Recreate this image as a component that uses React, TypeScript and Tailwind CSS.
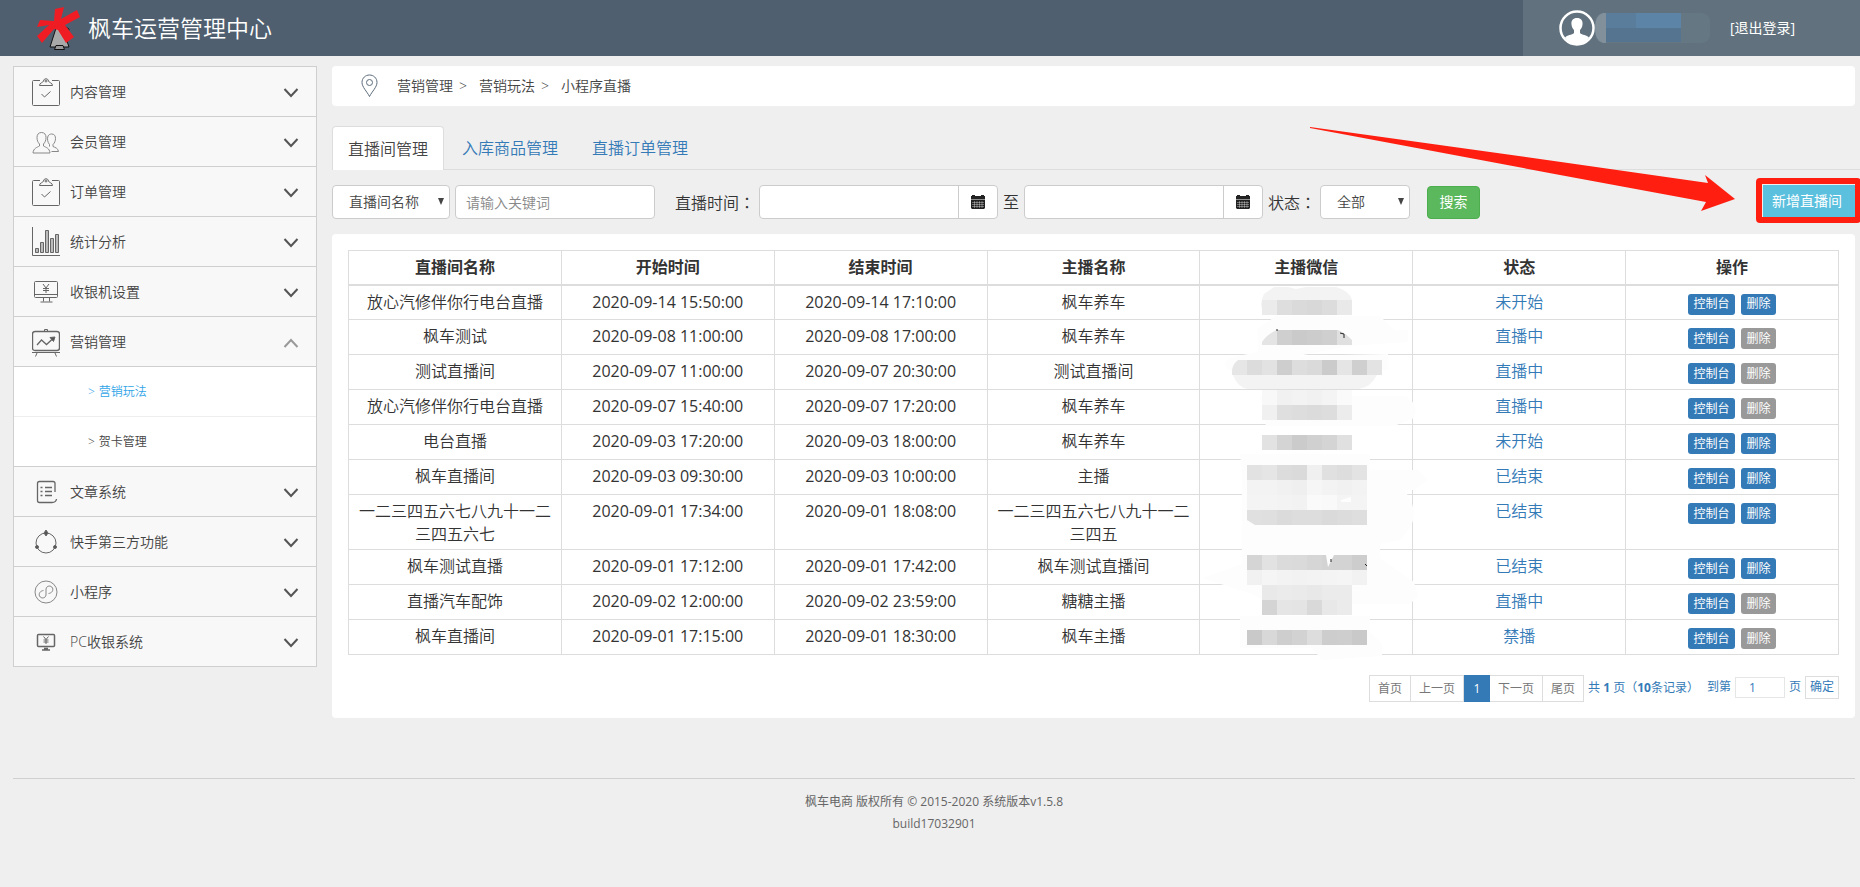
import { useState } from "react";

interface Room {
  name: string;
  start: string;
  end: string;
  anchor: string;
  status: string;
  canDelete: boolean;
}

const rooms: Room[] = [
  { name: "放心汽修伴你行电台直播", start: "2020-09-14 15:50:00", end: "2020-09-14 17:10:00", anchor: "枫车养车", status: "未开始", canDelete: true },
  { name: "枫车测试", start: "2020-09-08 11:00:00", end: "2020-09-08 17:00:00", anchor: "枫车养车", status: "直播中", canDelete: false },
  { name: "测试直播间", start: "2020-09-07 11:00:00", end: "2020-09-07 20:30:00", anchor: "测试直播间", status: "直播中", canDelete: false },
  { name: "放心汽修伴你行电台直播", start: "2020-09-07 15:40:00", end: "2020-09-07 17:20:00", anchor: "枫车养车", status: "直播中", canDelete: false },
  { name: "电台直播", start: "2020-09-03 17:20:00", end: "2020-09-03 18:00:00", anchor: "枫车养车", status: "未开始", canDelete: true },
  { name: "枫车直播间", start: "2020-09-03 09:30:00", end: "2020-09-03 10:00:00", anchor: "主播", status: "已结束", canDelete: true },
  { name: "一二三四五六七八九十一二三四五六七", start: "2020-09-01 17:34:00", end: "2020-09-01 18:08:00", anchor: "一二三四五六七八九十一二三四五", status: "已结束", canDelete: true },
  { name: "枫车测试直播", start: "2020-09-01 17:12:00", end: "2020-09-01 17:42:00", anchor: "枫车测试直播间", status: "已结束", canDelete: true },
  { name: "直播汽车配饰", start: "2020-09-02 12:00:00", end: "2020-09-02 23:59:00", anchor: "糖糖主播", status: "直播中", canDelete: false },
  { name: "枫车直播间", start: "2020-09-01 17:15:00", end: "2020-09-01 18:30:00", anchor: "枫车主播", status: "禁播", canDelete: false },
];

const columns = ["直播间名称", "开始时间", "结束时间", "主播名称", "主播微信", "状态", "操作"];

const menus = [
  { label: "内容管理", icon: "clipboard" },
  { label: "会员管理", icon: "users" },
  { label: "订单管理", icon: "clipboard" },
  { label: "统计分析", icon: "chart" },
  { label: "收银机设置", icon: "cashier" },
  { label: "营销管理", icon: "board", children: ["营销玩法", "贺卡管理"] },
  { label: "文章系统", icon: "article" },
  { label: "快手第三方功能", icon: "ring" },
  { label: "小程序", icon: "mini" },
  { label: "PC收银系统", icon: "pc" },
];

// masked wechat ids: x, y of the first block, then one colour per 15px block
const masks: [number, number, string[]][] = [
  [62, 50, ["#ebebeb", "#dedede", "#dadada", "#d8d8d8", "#dcdcdc", "#e9e9e9"]],
  [62, 80, ["#e4e4e4", "#cfcfcf", "#cacaca", "#cccccc", "#cfcfcf", "#e0e0e0"]],
  [32, 110, ["#e6e6e6", "#dcdcdc", "#e2e2e2", "#cecece", "#dddddd", "#dadada", "#cbcbcb", "#e5e5e5", "#cfcfcf", "#e3e3e3"]],
  [62, 140, ["#f8f8f8", "#f1f1f1", "#f3f3f3", "#f1f1f1", "#f4f4f4", "#fafafa"]],
  [62, 155, ["#f0f0f0", "#dfdfdf", "#dddddd", "#dbdbdb", "#dddddd", "#ececec"]],
  [62, 185, ["#e2e2e2", "#d4d4d4", "#cbcbcb", "#d0d0d0", "#d4d4d4", "#e0e0e0"]],
  [47, 215, ["#e2e2e2", "#e5e5e5", "#dcdcdc", "#dadada", "#f0f0f0", "#e0e0e0", "#dddddd", "#e3e3e3"]],
  [47, 230, ["#f3f3f3", "#f3f3f3", "#f1f1f1", "#efefef", "#f6f6f6", "#f3f3f3", "#f1f1f1", "#f3f3f3"]],
  [47, 245, ["#f4f4f4", "#f4f4f4", "#f3f3f3", "#f2f2f2", "#fafafa", "#f9f9f9", "#f4f4f4", "#f4f4f4"]],
  [47, 260, ["#e0e0e0", "#dfdfdf", "#dbdbdb", "#dddddd", "#dddddd", "#dadada", "#dcdcdc", "#dedede"]],
  [47, 305, ["#d5d5d5", "#e2e2e2", "#dbdbdb", "#dadada", "#d6d6d6", "#d3d3d3", "#d3d3d3", "#cdcdcd"]],
  [47, 320, ["#f1f1f1", "#f5f5f5", "#f3f3f3", "#f2f2f2", "#f3f3f3", "#f4f4f4", "#f5f5f5", "#f2f2f2"]],
  [62, 335, ["#e9e9e9", "#ebebeb", "#eaeaea", "#e8e8e8", "#ebebeb", "#ebebeb"]],
  [62, 350, ["#d4d4d4", "#e5e5e5", "#e4e4e4", "#d9d9d9", "#e8e8e8", "#ebebeb"]],
  [47, 380, ["#c9c9c9", "#d8d8d8", "#cecece", "#d2d2d2", "#dddddd", "#cdcdcd", "#cecece", "#c9c9c9"]],
];

const link = "text-[#337ab7] hover:underline";

// full-width punctuation centred in its box
function Punct({ children }: { children: string }) {
  return <span className="font-['Noto_Sans_CJK_TC',sans-serif]">{children}</span>;
}

function MenuIcon({ name }: { name: string }) {
  return (
    <svg width="28" height="30" viewBox="0 0 28 30" fill="none" stroke="#666" strokeWidth="1" className="shrink-0">
      {name === "clipboard" && (
        <>
          <path d="M8 3.500H1.500q-1 0-1 1v23q0 1 1 1h25q1 0 1-1v-23q0-1-1-1H20" />
          <path d="M7.500 8.500c0-3 3.500-2.500 4-4.500C11.800 1 16.200 1 16.500 4c.5 2 4 1.500 4 4.500z" />
          <circle cx="14" cy="4" r="1" />
          <path d="M9.500 17l3 3 6-5.500" />
        </>
      )}
      {name === "users" && (
        <g stroke="#888">
          <path d="M9.500 5.500c-3 0-4.500 2-4.500 5 0 3 1 5 2.500 6.500v2C5 20.500 1.500 21 1 26h17c-.5-5-4-5.500-6.500-7v-2C13 15.500 14 13.500 14 10.500c0-3-1.500-5-4.500-5z" />
          <path d="M16 9c.8-1.200 2-2 3.500-2 3 0 4 2 4 4.500S22.500 16 21 17.500v2c2 1 5 1.500 5.500 5h-7M16 9c-1 3-.5 6 1.500 8.500v2" />
        </g>
      )}
      {name === "chart" && (
        <>
          <path d="M.5 0v28.500H28" />
          <path d="M3.500 21.500h3v4h-3zM8.500 15.500h3v10h-3zM13.500 3.500h3v22h-3zM18.500 11.500h3v14h-3zM23.500 7.500h3v18h-3z" fill="#bbb" />
        </>
      )}
      {name === "cashier" && (
        <>
          <path d="M3.500 4.500h21q1 0 1 1v14q0 1-1 1h-21q-1 0-1-1v-14q0-1 1-1zM2.500 17.500h23M11.500 20.500v4M17.500 20.500v4M8.500 25h12" />
          <path d="M11 7l3 4 3-4M14 11v5M11 11.500h6M11 13.500h6" />
        </>
      )}
      {name === "board" && (
        <>
          <path d="M3 4.500h22q2.500 0 2.500 2.500v14q0 2.500-2.500 2.500H3Q.5 23.500.5 21V7q0-2.500 2.500-2.500z" strokeWidth="1.400" />
          <path d="M12.500 4V2.500h3V4M0 25.500h28M5 26l-1.500 3.500M23 26l1.500 3.500" />
          <path d="M5 18l4.500-5 5 4.500 6-5.500" strokeWidth="1.300" />
          <path d="M18 10.500l5-.5-1.500 4.500z" fill="#555" />
        </>
      )}
      {name === "article" && (
        <>
          <path d="M23 15V6.500Q23 4.500 21 4.500H7.500Q5.500 4.500 5.500 6.500v17q0 2 2 2H20q4 0 4.500-3.500" strokeWidth="1.300" />
          <path d="M8.500 10.500h2M8.500 14.500h2M8.500 18.500h2M13 10.500h7M13 14.500h7M13 18.500h7" strokeWidth="1.500" />
        </>
      )}
      {name === "ring" && (
        <>
          <circle cx="14" cy="16" r="10" />
          <path d="M14 3l2 3-2 3-2-3z" fill="#555" />
          <circle cx="5" cy="20" r="1.500" fill="#555" />
          <circle cx="23" cy="20" r="1.500" fill="#555" />
        </>
      )}
      {name === "mini" && (
        <g stroke="#888">
          <circle cx="14" cy="15" r="11" />
          <path d="M11.500 13.500C8 14 6.500 16.500 7.500 19c1.500 3 6 2.500 6.500-1v-6c.5-3.500 5-4 6.500-1 1 2.500-.5 5-4 5.500" />
        </g>
      )}
      {name === "pc" && (
        <>
          <path d="M6.500 7.500h15q1 0 1 1v10q0 1-1 1h-15q-1 0-1-1v-10q0-1 1-1zM10 23h8M12 21.500h4" strokeWidth="1.500" />
          <path d="M11.500 9.500l2.500 3 2.500-3M14 12.500V17M11.500 13h5M11.500 15h5" />
        </>
      )}
    </svg>
  );
}

function Logo() {
  return (
    <svg width="46" height="46" viewBox="0 0 46 46">
      <path d="M23 20l-7 22h19L27 19l8 5-1 5" fill="#a9a9a9" stroke="#111" />
      <path d="M22 40.500h7l1.500 4h-10z" fill="#999" stroke="#111" />
      <path d="M21 4l9-2-3 12 16-9 3 7-15 8 9 12-8 6-8-13-4-1L8 38l-5-7 12-11-12 2 3-7 14 1z" fill="#f01c24" />
    </svg>
  );
}

function Header() {
  return (
    <header className="flex h-14 justify-between bg-[#4f5f6f] text-white">
      <div className="flex items-center gap-2 pl-[34px]">
        <Logo />
        <h1 className="text-[23px]">枫车运营管理中心</h1>
      </div>
      <div className="flex w-[337px] items-center bg-[#61717d] pl-9">
        <svg width="36" height="36" viewBox="0 0 36 36" className="shrink-0">
          <circle cx="18" cy="18" r="16.500" fill="none" stroke="#fff" strokeWidth="2.500" />
          <path d="M18 8c-4 0-6 2.500-5.500 6.500.2 2.500 1.300 4.500 2.500 5.500v3c-2 2-7 2-9 4.500C9 32 13.500 34 18 34s9-2 12-6.500c-2-2.500-7-2.500-9-4.500v-3c1.200-1 2.300-3 2.500-5.500C24 10.500 22 8 18 8z" fill="#fff" />
        </svg>
        <svg width="115" height="30" viewBox="0 0 115 30" className="shrink-0" aria-label="用户名">
          <rect width="115" height="30" rx="8" fill="#667784" />
          <path d="M8 0h3v30H8Q0 28 0 15T8 0z" fill="#82909b" />
          <path d="M11 0h75v15H11z" fill="#5a7d9c" />
          <path d="M11 15h75v14H11z" fill="#54748f" />
          <path d="M41 0h45v15H41z" fill="#5b84a6" />
        </svg>
        <a href="#logout" className="ml-5 text-sm font-normal whitespace-nowrap">[退出登录]</a>
      </div>
    </header>
  );
}

function Sidebar() {
  const [open, setOpen] = useState("营销管理");

  return (
    <aside className="w-[304px] shrink-0 self-start border border-b-0 border-[#cfcfcf] bg-[#f8f8f8] text-[#444]">
      {menus.map((menu) => {
        const isOpen = open === menu.label;
        return (
          <div key={menu.label}>
            <button
              onClick={() => setOpen(isOpen ? "" : menu.label)}
              className="flex h-[50px] w-full cursor-pointer items-center border-b border-[#cfcfcf] pr-[17px] pl-[18px] text-sm"
            >
              <MenuIcon name={menu.icon} />
              <span className="ml-[10px] flex-1 text-left">{menu.label}</span>
              <svg width="16" height="10" viewBox="0 0 16 10" fill="none" strokeWidth="2" className="mt-[3px]">
                {isOpen ? <path d="M1.500 9L8 2l6.500 7" stroke="#999" /> : <path d="M1.500 1L8 8l6.500-7" stroke="#555" />}
              </svg>
            </button>
            {isOpen && menu.children && (
              <ul className="border-b border-[#cfcfcf] bg-white text-xs">
                {menu.children.map((child, i) => (
                  <li key={child} className={i === 0 ? "border-b border-[#eee]" : ""}>
                    <a
                      href="#menu"
                      className={`flex h-[49px] items-center gap-1 pl-[74px] ${i === 0 ? "text-[#2fa4e7]" : "text-[#444]"}`}
                    >
                      <span>&gt;</span>
                      {child}
                    </a>
                  </li>
                ))}
              </ul>
            )}
          </div>
        );
      })}
    </aside>
  );
}

function Breadcrumb() {
  return (
    <nav className="mr-[5px] flex h-10 items-center rounded bg-white pl-[29px] text-sm text-[#444]">
      <svg width="17" height="24" viewBox="0 0 17 24" fill="none" stroke="#5b6b7b" className="mr-[19px]">
        <path d="M8.500 22.500C6 17.500 1 13 1 8.500 1 4 4.500 1 8.500 1S16 4 16 8.500c0 4.500-5 9-7.500 14z" />
        <circle cx="8.500" cy="8.500" r="3" />
      </svg>
      <a href="#marketing">营销管理</a>
      <span className="mr-3 ml-[6px]">&gt;</span>
      <a href="#play">营销玩法</a>
      <span className="mr-3 ml-[6px]">&gt;</span>
      <span>小程序直播</span>
    </nav>
  );
}

function Tabs() {
  return (
    <nav className="mt-5 flex h-11 gap-[2px] border-b border-[#ddd] text-base">
      <a href="#rooms" className="-mb-px flex items-center rounded-t border border-b-0 border-[#ddd] bg-white px-[15px] text-[#444]">
        直播间管理
      </a>
      <a href="#goods" className="flex items-center px-4 text-[#337ab7]">入库商品管理</a>
      <a href="#orders" className="flex items-center px-4 text-[#337ab7]">直播订单管理</a>
    </nav>
  );
}

function FilterSelect({ label, options, className }: { label: string; options: string[]; className: string }) {
  return (
    <div className={`relative shrink-0 ${className}`}>
      <select aria-label={label} className="h-full w-full appearance-none rounded border border-[#ccc] bg-white pl-4 text-sm text-[#444]">
        {options.map((o) => (
          <option key={o}>{o}</option>
        ))}
      </select>
      <svg width="6" height="7" viewBox="0 0 6 7" className="pointer-events-none absolute top-[13px] right-[6px]">
        <path d="M0 0h6L3 7z" fill="#444" />
      </svg>
    </div>
  );
}

function DateInput({ id, label }: { id: string; label: string }) {
  return (
    <div className="flex h-full shrink-0 rounded border border-[#ccc] bg-white">
      <input id={id} aria-label={label} type="text" className="w-[198px] rounded-l px-3 text-sm focus:outline-none" />
      <button aria-label="选择日期" className="flex w-[39px] cursor-pointer items-center justify-center border-l border-[#ccc]">
        <svg width="14" height="14" viewBox="0 0 14 14" fill="#222">
          <path d="M0 1h1V0h3v1h6V0h3v1h1v3H0z" />
          <path d="M0 4.500h14V13l-1 1H1l-1-1z" />
          <path d="M1 7.500h12M1 9.500h12M1 11.500h12M3.500 6v7M6 6v7M8.500 6v7M11 6v7" stroke="#fff" strokeWidth=".35" />
        </svg>
      </button>
    </div>
  );
}

function Filters() {
  return (
    <div className="relative mt-[15px] mr-[5px] flex h-[34px] items-center text-base text-[#333]">
      <FilterSelect label="搜索字段" options={["直播间名称", "主播名称"]} className="mr-[5px] h-full w-[118px]" />
      <input
        type="text"
        aria-label="关键词"
        placeholder="请输入关键词"
        className="h-full w-[200px] shrink-0 rounded border border-[#ccc] bg-white px-[10px] text-sm placeholder-[#888]"
      />
      <label htmlFor="start" className="mr-1 ml-5 shrink-0">直播时间<Punct>：</Punct></label>
      <DateInput id="start" label="开始日期" />
      <span className="mx-[5px] shrink-0">至</span>
      <DateInput id="end" label="结束日期" />
      <span className="mr-1 ml-[5px] shrink-0">状态<Punct>：</Punct></span>
      <FilterSelect label="状态" options={["全部", "未开始", "直播中", "已结束", "禁播"]} className="h-full w-[90px]" />
      <button className="ml-[17px] h-[33px] w-[53px] shrink-0 cursor-pointer rounded border border-[#4cae4c] bg-[#5cb85c] text-sm font-normal text-white">
        搜索
      </button>
      <div className="relative ml-auto h-8 w-[92px] shrink-0 self-start">
        <button className="h-full w-full cursor-pointer bg-[#5bc0de] pr-1 text-sm font-normal text-white">新增直播间</button>
        <div className="pointer-events-none absolute -top-[7px] -right-[6px] -bottom-[6px] -left-[7px] rounded border-[6px] border-[#ff1e10]" />
        <svg width="426" height="86" viewBox="0 0 426 86" className="pointer-events-none absolute -top-[58px] right-[119px]">
          <path d="M0 0L251 35 398 56 395 48 425 72 391 84 396 75 250 48 0 1z" fill="#ff1e10" />
        </svg>
      </div>
    </div>
  );
}

function MaskLayer() {
  return (
    <svg width="213" height="406" viewBox="0 0 213 406" className="overflow-visible">
      <g fill="#fdfdfd">
        <path d="M76 66h104l14 14h14v12l-60 4-50 10 90-2v16H30q-14-8 8-14l20-4V78z" />
        <path d="M60 146h146q14 10 8 22l-20 8H66zM40 204h130v16h48l10 10-14 10h-10q16 20 6 38l-10 12-20 4v14l34 24 4 14-8 8H70l-18-10-50-16 40-14V220z" />
        <path d="M40 366h130v16l12 12v12l-60 4-10-12H40z" />
      </g>
      <path d="M74 37h14l8 2 10-2h30q14 4 16 13v15H70Q56 60 64 44z" fill="#f3f3f3" />
      <path d="M33 125h144q-6 12-18 14H48Q38 138 33 125z" fill="#f3f3f3" />
      {masks.map(([x, y, blocks]) =>
        blocks.map((fill, i) => <rect key={`${x}-${y}-${i}`} x={x + i * 15} y={y} width="15" height="15" fill={fill} />)
      )}
      {/* brush corners */}
      <g fill="#fdfdfd">
        <path d="M62 80h15q-10 4-15 12zM152 95v-5q-8-8-14-10h14z" />
        <path d="M32 110h6q-6 5-6 11zM47 275v-5l8 5zM126 305h8l-6 12z" />
        <path d="M141 250l10-3v5h-10z" />
      </g>
      <path d="M77 79v2M140 83l4 1v4M165 314l2 2M131 309v3" stroke="#222" fill="none" />
    </svg>
  );
}

function RoomTable() {
  const cell = "border border-[#ddd]";

  return (
    <div className="relative">
      <table className="w-full table-fixed border-collapse text-center text-base leading-[23px] text-[#333]">
        <thead>
          <tr className="h-[34px]">
            {columns.map((c) => (
              <th key={c} className={`${cell} border-b-2 font-bold`}>{c}</th>
            ))}
          </tr>
        </thead>
        <tbody>
          {rooms.map((room, i) => (
            <tr key={i} className="h-[35px] align-top">
              <td className={`${cell} px-2 pt-[5px] pb-[3px]`}>{room.name}</td>
              <td className={`${cell} pt-[5px] font-normal`}>{room.start}</td>
              <td className={`${cell} pt-[5px] font-normal`}>{room.end}</td>
              <td className={`${cell} px-2 pt-[5px] pb-[3px]`}>{room.anchor}</td>
              <td className={cell}></td>
              <td className={`${cell} pt-[5px]`}>
                <a href="#status" className={link}>{room.status}</a>
              </td>
              <td className={cell}>
                <div className="flex justify-center gap-[6px] pt-2 text-xs font-normal text-white">
                  <button className="h-[21px] w-[47px] cursor-pointer rounded-[3px] bg-[#337ab7]">控制台</button>
                  <button disabled={!room.canDelete} className="h-[21px] w-[35px] cursor-pointer rounded-[3px] bg-[#337ab7] disabled:bg-[#999]">
                    删除
                  </button>
                </div>
              </td>
            </tr>
          ))}
        </tbody>
      </table>
      <div className="pointer-events-none absolute top-0 left-4/7 flex w-1/7 justify-center">
        <MaskLayer />
      </div>
    </div>
  );
}

function Pagination() {
  const item = "flex h-full items-center border border-[#ddd] text-[#777]";

  return (
    <div className="mt-5 flex h-[27px] items-start justify-end text-xs font-normal whitespace-nowrap text-[#337ab7]">
      <nav className="mr-1 flex h-full">
        <a href="#first" className={`${item} px-2`}>首页</a>
        <a href="#prev" className={`${item} border-l-0 px-2`}>上一页</a>
        <a href="#1" aria-current="page" className="flex h-full w-[26px] items-center justify-center bg-[#337ab7] text-white">1</a>
        <a href="#next" className={`${item} border-l-0 px-2`}>下一页</a>
        <a href="#last" className={`${item} border-l-0 px-2`}>尾页</a>
      </nav>
      <div className="flex h-6 items-center">
        <span>共 <b>1</b> 页<Punct>（</Punct><b>10</b>条记录<Punct>）</Punct></span>
        <label htmlFor="page" className="mr-1 ml-2">到第</label>
        <input id="page" defaultValue="1" className="h-[21px] w-[50px] border border-[#e6e6e6] bg-white pl-[13px]" />
        <span className="mx-1">页</span>
        <button className="h-[23px] w-[34px] cursor-pointer border border-[#ddd]">确定</button>
      </div>
    </div>
  );
}

export default function App() {
  return (
    <div className="min-h-screen overflow-x-hidden bg-[#efefef] font-['Open_Sans','Noto_Sans_CJK_SC',sans-serif] font-[350]">
      <Header />
      <div className="flex gap-[15px] pt-[10px] pl-[13px]">
        <Sidebar />
        <main className="min-w-0 flex-1">
          <Breadcrumb />
          <Tabs />
          <Filters />
          <section className="mt-[15px] mr-[5px] rounded bg-white p-4">
            <RoomTable />
            <Pagination />
          </section>
        </main>
      </div>
      <footer className="mt-[60px] mr-[5px] ml-[13px] border-t border-[#d0d0d0] pt-3 text-center text-xs leading-[22px] font-normal text-[#666]">
        <p>枫车电商 版权所有 © 2015-2020 系统版本v1.5.8</p>
        <p>build17032901</p>
      </footer>
    </div>
  );
}
